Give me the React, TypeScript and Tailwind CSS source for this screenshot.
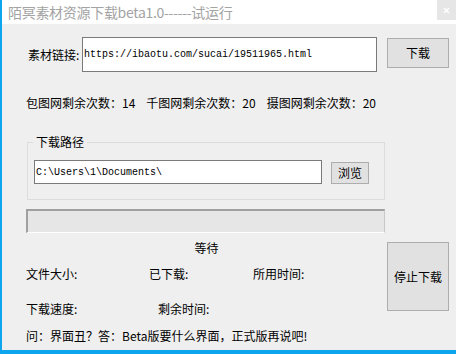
import React from "react";

const cjk = { fontFamily: '"Noto Sans CJK SC", "Noto Sans", sans-serif' };
const mono = { fontFamily: '"Liberation Mono", "Noto Sans CJK SC", monospace' };

export default function App() {
  return (
    <div
      className="w-[456px] h-[354px] box-border border-l-2 border-b-4 border-[#0ea5ef] bg-[#efefef] flex flex-col text-black overflow-hidden"
      style={cjk}
    >
      {/* title bar */}
      <div className="h-[24px] bg-white flex items-start justify-between shrink-0">
        <div className="pl-[6px] text-[14px] leading-[24px] text-[#a3a3a3] tracking-[-0.3px]">
          陌冥素材资源下载beta1.0------试运行
        </div>
        <div className="w-[19px] h-[20px] bg-[#e6e6e6] flex items-center justify-center">
          <svg width="7" height="7" viewBox="0 0 7 7">
            <path d="M1 1L6 6M6 1L1 6" stroke="#ffffff" strokeWidth="1.4" />
          </svg>
        </div>
      </div>

      {/* URL row */}
      <div className="flex items-start mt-[13px] text-[12px]">
        <div className="ml-[26px] w-[54px] h-[35px] leading-[35px] whitespace-nowrap">素材链接:</div>
        <div className="w-[295px] h-[35px] box-border border border-[#7a7a7a] bg-white flex items-center pl-[1px] pb-[1px] text-[10px]" style={mono}>
          https://ibaotu.com/sucai/19511965.html
        </div>
        <button className="ml-[10px] mt-[1px] w-[62px] h-[30px] box-border border border-[#adadad] bg-[#e1e1e1] text-[12px] flex items-center justify-center">
          下载
        </button>
      </div>

      {/* stats */}
      <div className="ml-[24px] mt-[23px] text-[12px] leading-[16px] flex whitespace-pre">
        <span>包图网剩余次数：14</span>
        <span className="ml-[11px]">千图网剩余次数：20</span>
        <span className="ml-[11px]">摄图网剩余次数：20</span>
      </div>

      {/* group box */}
      <div className="relative ml-[25px] mt-[31px] w-[358px] h-[58px] box-border border border-[#dcdcdc] pt-[17px] pl-[6px] flex items-start">
        <span className="absolute -top-[9px] left-[5px] px-[3px] bg-[#efefef] text-[12px] leading-[16px]">下载路径</span>
        <div className="w-[288px] h-[24px] box-border border border-[#7a7a7a] bg-white flex items-center pl-[1px] text-[10px]" style={mono}>
          C:\Users\1\Documents\
        </div>
        <button className="ml-[9px] mt-[2px] w-[38px] h-[22px] box-border border border-[#adadad] bg-[#e1e1e1] text-[12px] flex items-center justify-center">
          浏览
        </button>
      </div>

      {/* progress */}
      <div className="ml-[24px] mt-[9px] w-[359px] h-[24px] box-border border-t-2 border-l-2 border-r border-b border-t-[#a0a0a0] border-l-[#a0a0a0] border-r-[#c8c8c8] border-b-white bg-[#e6e6e6]" />

      {/* lower area */}
      <div className="flex items-start text-[12px]">
        <div className="w-[361px] ml-[24px] flex flex-col">
          <div className="mt-[7px] leading-[16px] text-center">等待</div>
          <div className="mt-[10px] leading-[16px] flex">
            <span className="w-[123px]">文件大小:</span>
            <span className="w-[104px]">已下载:</span>
            <span>所用时间:</span>
          </div>
          <div className="mt-[19px] leading-[16px] flex">
            <span className="w-[132px]">下载速度:</span>
            <span>剩余时间:</span>
          </div>
          <div className="mt-[11px] leading-[16px]">问：界面丑？答：Beta版要什么界面，正式版再说吧!</div>
        </div>
        <button className="mt-[9px] w-[62px] h-[69px] box-border border border-[#adadad] bg-[#e1e1e1] text-[12px] flex items-center justify-center">
          停止下载
        </button>
      </div>
    </div>
  );
}
